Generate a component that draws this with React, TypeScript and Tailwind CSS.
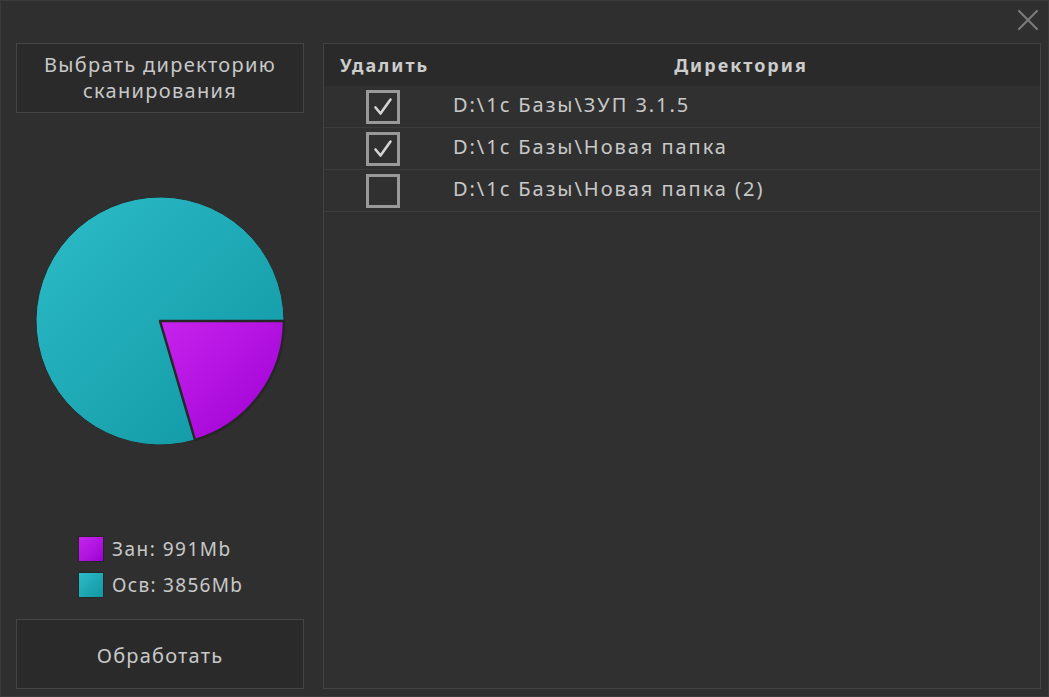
const rows = [
  { path: 'D:\\1c Базы\\ЗУП 3.1.5', checked: true },
  { path: 'D:\\1c Базы\\Новая папка', checked: true },
  { path: 'D:\\1c Базы\\Новая папка (2)', checked: false },
];

const used = 991;
const free = 3856;

function Pie() {
  const r = 124;
  const cx = 126;
  const cy = 126;
  const a = (used / (used + free)) * Math.PI * 2;
  const ex = cx + r * Math.cos(a);
  const ey = cy + r * Math.sin(a);
  const large = a > Math.PI ? 1 : 0;
  return (
    <svg width="252" height="252" viewBox="0 0 252 252">
      <defs>
        <linearGradient id="teal" x1="0" y1="0" x2="1" y2="1">
          <stop offset="0" stopColor="#2cbcc8" />
          <stop offset="1" stopColor="#0f96a2" />
        </linearGradient>
        <linearGradient id="mag" x1="0" y1="0" x2="1" y2="1">
          <stop offset="0" stopColor="#c823ee" />
          <stop offset="1" stopColor="#9c00d2" />
        </linearGradient>
      </defs>
      <path
        d={`M${cx} ${cy} L${ex} ${ey} A${r} ${r} 0 ${1 - large} 1 ${cx + r} ${cy} Z`}
        fill="url(#teal)"
        stroke="#2a2a2a"
        strokeWidth="1"
      />
      <path
        d={`M${cx} ${cy} L${cx + r} ${cy} A${r} ${r} 0 ${large} 1 ${ex} ${ey} Z`}
        fill="url(#mag)"
        stroke="#262626"
        strokeWidth="2.5"
        strokeLinejoin="round"
      />
    </svg>
  );
}

function Check({ checked }: { checked: boolean }) {
  return (
    <div className="w-[34px] h-[34px] border-[3px] border-[#999999] flex items-center justify-center">
      {checked && (
        <svg width="24" height="24" viewBox="0 0 24 24" fill="none" stroke="#d4d4d4" strokeWidth="2.6" strokeLinecap="round" strokeLinejoin="round">
          <path d="M4.5 12.5l5 6 10-14" />
        </svg>
      )}
    </div>
  );
}

export default function App() {
  return (
    <div
      className="w-[1049px] h-[697px] bg-[#2f2f2f] border border-[#3a3a3a] flex flex-col text-[#c8c8c8] overflow-hidden"
      style={{ fontFamily: '"Noto Sans", "Open Sans", sans-serif' }}
    >
      <div className="h-[42px] flex items-start justify-end pr-[8px] pt-[7px] shrink-0">
        <svg width="24" height="24" viewBox="0 0 24 24" stroke="#7a7a7a" strokeWidth="2.2" strokeLinecap="round">
          <path d="M3 3l18 18M21 3L3 21" />
        </svg>
      </div>
      <div className="flex-1 flex pl-[15px] pr-[7px] pb-[7px] gap-[19px] min-h-0">
        <div className="w-[288px] flex flex-col items-center">
          <button className="w-full h-[70px] bg-[#2a2a2a] border border-[#454545] text-[20px] leading-[26px] tracking-[1.3px] text-[#c8c8c8]">
            Выбрать директорию
            <br />
            сканирования
          </button>
          <div className="mt-[82px]">
            <Pie />
          </div>
          <div className="mt-[89px] flex flex-col gap-[10px] self-start ml-[62px]">
            <div className="flex items-center gap-[8px]">
              <div className="w-[26px] h-[26px] border border-[#262626] bg-gradient-to-br from-[#c823ee] to-[#9c00d2]" />
              <span className="text-[19px] leading-[26px] tracking-[1.5px]">Зан: {used}Mb</span>
            </div>
            <div className="flex items-center gap-[8px]">
              <div className="w-[26px] h-[26px] border border-[#262626] bg-gradient-to-br from-[#2cbcc8] to-[#0f96a2]" />
              <span className="text-[19px] leading-[26px] tracking-[1.3px]">Осв: {free}Mb</span>
            </div>
          </div>
          <button className="mt-auto w-full h-[70px] pt-[4px] bg-[#2a2a2a] border border-[#454545] text-[20px] tracking-[1.2px] text-[#c8c8c8]">
            Обработать
          </button>
        </div>
        <div className="flex-1 border border-[#434343] bg-[#303030] flex flex-col">
          <div className="h-[42px] flex items-center bg-[#2a2a2a] font-bold text-[18px] tracking-[2px] text-[#cccccc] shrink-0">
            <div className="w-[118px] pl-[16px]">Удалить</div>
            <div className="flex-1 text-center">Директория</div>
          </div>
          {rows.map((r) => (
            <div key={r.path} className="h-[42px] flex items-center border-b border-[#3c3c3c]">
              <div className="w-[118px] flex justify-center">
                <Check checked={r.checked} />
              </div>
              <div className="pl-[11px] pb-[3px] text-[20px] tracking-[1.95px] text-[#c8c8c8]">{r.path}</div>
            </div>
          ))}
        </div>
      </div>
    </div>
  );
}
